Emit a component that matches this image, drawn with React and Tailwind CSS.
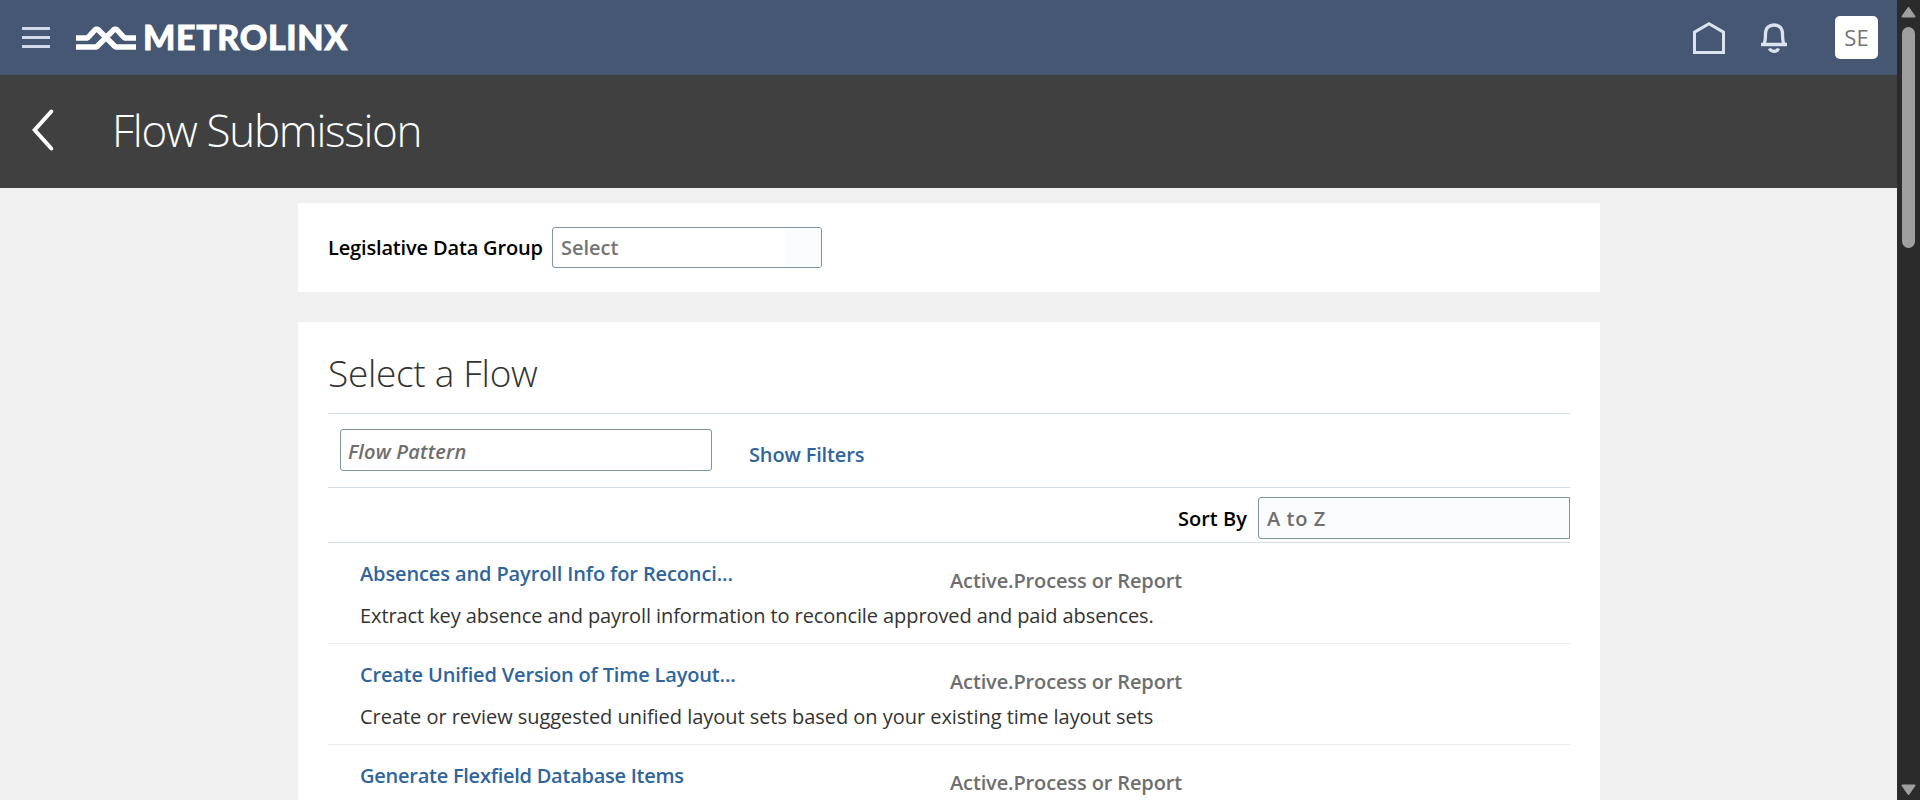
import React from "react";

const flows = [
  {
    name: "Absences and Payroll Info for Reconci...",
    description: "Extract key absence and payroll information to reconcile approved and paid absences.",
    nameClass: "tracking-[-0.12px]",
    descriptionClass: "tracking-[-0.09px]",
  },
  {
    name: "Create Unified Version of Time Layout...",
    description: "Create or review suggested unified layout sets based on your existing time layout sets",
    nameClass: "tracking-[-0.16px]",
    descriptionClass: "tracking-[-0.04px]",
  },
  {
    name: "Generate Flexfield Database Items",
    nameClass: "tracking-[-0.25px]",
  },
];

function Logo() {
  return (
    <div className="ml-[25px] flex items-center">
      <svg width="62" height="28" viewBox="0 0 62 28" fill="none" stroke="white" strokeWidth="5.500" strokeLinejoin="bevel">
        <path d="M1 14H12.500L20.700 5.200H22.700L40.500 23H61" />
        <path d="M1 23H21.500L39.300 5.200H41.300L49.500 14H61" />
      </svg>
      <span className="ml-[6px] pb-[2px] text-[34px] leading-[40px] font-black font-['Lato',sans-serif] tracking-[0.65px] [-webkit-text-stroke:0.8px_white]">
        METROLINX
      </span>
    </div>
  );
}

function TopBar() {
  return (
    <header className="flex h-[75px] shrink-0 items-center bg-[#465773] pl-[22px] pr-[19px] text-white">
      <button className="flex h-[21px] w-[28px] flex-col justify-between" aria-label="Navigator">
        <span className="h-[3px] w-full bg-[#d0daea]" />
        <span className="h-[3px] w-full bg-[#d0daea]" />
        <span className="h-[3px] w-full bg-[#d0daea]" />
      </button>
      <Logo />
      <div className="ml-auto flex items-center">
        <svg width="34" height="34" viewBox="0 0 34 34" fill="none" stroke="#dbe3ef" strokeWidth="3">
          <path d="M2.500 31.500V11.200L17 2.700L31.500 11.200V31.500Z" />
        </svg>
        <svg className="ml-[34px]" width="28" height="32" viewBox="0 0 28 32" fill="none" stroke="#dbe3ef" strokeWidth="3.300">
          <path d="M1 22.500H27M4 22C5.500 19 5.500 16 5.500 12C5.500 6 9 3 14 3S22.500 6 22.500 12C22.500 16 22.500 19 24 22" />
          <path d="M9.500 26.500C11 30.200 17 30.200 18.500 26.500" />
        </svg>
        <div className="ml-[47px] flex size-[43px] items-center justify-center rounded-[5px] bg-white pb-px text-[22px] text-[#757575]">
          SE
        </div>
      </div>
    </header>
  );
}

function TitleBar() {
  return (
    <div className="flex h-[113px] shrink-0 items-center bg-[#404040] pb-[3px] pl-[31px] text-white">
      <svg width="24" height="44" viewBox="0 0 24 44" fill="none" stroke="white" strokeWidth="4" strokeLinecap="round">
        <path d="M20.300 3.500L3.700 22L20.300 40.500" />
      </svg>
      <h1 className="ml-[57px] text-[44px] leading-[60px] font-light tracking-[-1.3px]">Flow Submission</h1>
    </div>
  );
}

function FlowRow({ flow }) {
  return (
    <li className="h-[101px] border-b border-[#ebebeb] pl-[32px]">
      <div className="flex pt-[15px]">
        <a className={`w-[590px] text-[20px] leading-[32px] font-semibold text-[#30659c] ${flow.nameClass}`}>{flow.name}</a>
        <span className="pt-[7px] text-[20px] leading-[32px] font-semibold tracking-[-0.13px] text-[#6e6e6e]">
          Active.Process or Report
        </span>
      </div>
      {flow.description && (
        <p className={`mt-[3px] text-[20px] leading-[32px] text-[#333333] ${flow.descriptionClass}`}>{flow.description}</p>
      )}
    </li>
  );
}

function Scrollbar() {
  return (
    <div className="flex w-[23px] shrink-0 flex-col items-center bg-[#2b2b2b]">
      <svg className="mt-[6px] shrink-0" width="15" height="12" viewBox="0 0 15 12" fill="#9f9f9f" stroke="#9f9f9f" strokeWidth="2" strokeLinejoin="round">
        <path d="M7.500 2L13.500 10.500H1.500Z" />
      </svg>
      <div className="mt-[9px] h-[221px] w-[13px] rounded-full bg-[#9f9f9f]" />
      <svg className="mt-auto mb-[4px] shrink-0" width="15" height="12" viewBox="0 0 15 12" fill="#9f9f9f" stroke="#9f9f9f" strokeWidth="2" strokeLinejoin="round">
        <path d="M7.500 10L13.500 1.500H1.500Z" />
      </svg>
    </div>
  );
}

export default function App() {
  return (
    <div className="flex h-[800px] w-[1920px] overflow-hidden bg-[#f0f0f0] font-['Open_Sans','Noto_Sans',sans-serif]">
      <div className="flex min-w-0 flex-1 flex-col overflow-hidden">
        <TopBar />
        <TitleBar />
        <main className="flex flex-col gap-[30px] pt-[15px] pl-[298px]">
          <section className="flex h-[89px] w-[1302px] items-center bg-white pl-[30px]">
            <label className="w-[224px] text-[20px] font-semibold tracking-[-0.16px] text-black">Legislative Data Group</label>
            <div className="flex h-[41px] w-[270px] items-center overflow-hidden rounded-[3px] border border-[#7f93a0] bg-white">
              <span className="flex-1 pl-[8px] text-[20px] font-semibold text-[#757575]">Select</span>
              <span className="h-full w-[36px] bg-[#fbfcfe]" />
            </div>
          </section>

          <section className="h-[800px] w-[1302px] shrink-0 bg-white px-[30px]">
            <h2 className="h-[92px] border-b border-[#d2dde3] pt-[26px] text-[37px] leading-[50px] font-light tracking-[-0.3px] text-[#333333]">
              Select a Flow
            </h2>
            <div className="flex h-[74px] border-b border-[#d2dde3] pt-[15px] pl-[12px]">
              <div className="h-[42px] w-[372px] rounded-[3px] border border-[#7f93a0] pl-[7px] text-[20px] leading-[43px] font-semibold tracking-[0.2px] text-[#6e6e6e] italic">
                Flow Pattern
              </div>
              <a className="ml-[37px] text-[20px] leading-[52px] font-semibold tracking-[-0.15px] text-[#30659c]">Show Filters</a>
            </div>
            <div className="flex h-[55px] justify-end border-b border-[#d2dde3] pt-[9px]">
              <label className="w-[80px] text-[20px] leading-[44px] font-semibold text-black">Sort By</label>
              <div className="h-[42px] w-[312px] rounded-l-[3px] border border-[#7f93a0] bg-[#fbfcfe] pl-[8px] text-[20px] leading-[42px] font-semibold tracking-[0.6px] text-[#6e6e6e]">
                A to Z
              </div>
            </div>
            <ul>
              {flows.map((flow) => (
                <FlowRow key={flow.name} flow={flow} />
              ))}
            </ul>
          </section>
        </main>
      </div>
      <Scrollbar />
    </div>
  );
}
